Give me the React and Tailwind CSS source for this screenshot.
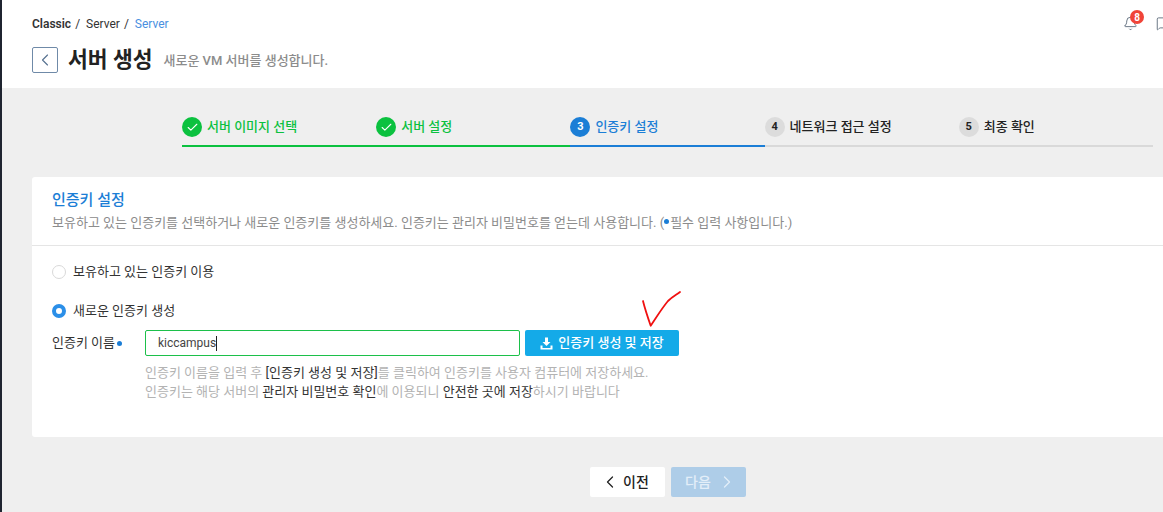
import React from 'react';
import { Bell, ChevronLeft, ChevronRight, Check, MessageSquare } from 'lucide-react';

const font = { fontFamily: '"Roboto", "Noto Sans CJK KR", sans-serif' };

const steps = [
  { no: 1, label: '서버 이미지 선택', state: 'done' },
  { no: 2, label: '서버 설정', state: 'done' },
  { no: 3, label: '인증키 설정', state: 'active' },
  { no: 4, label: '네트워크 접근 설정', state: 'todo' },
  { no: 5, label: '최종 확인', state: 'todo' },
];

const Step = ({ no, label, state }) => {
  const line = state === 'done' ? 'border-[#0bc13f]' : state === 'active' ? 'border-[#1b7ed6]' : 'border-[#d9d9d9]';
  const text = state === 'done' ? 'text-[#0bc13f]' : state === 'active' ? 'text-[#1b7ed6]' : 'text-[#222]';
  const circle = state === 'done' ? 'bg-[#0bc13f] text-white' : state === 'active' ? 'bg-[#1b7ed6] text-white' : 'bg-[#dcdcdc] text-[#222]';

  return (
    <div className={`w-[194.2px] h-[30px] flex items-start gap-[5px] border-b-2 ${line}`}>
      <span className={`w-5 h-5 rounded-full flex items-center justify-center text-[11px] font-bold ${circle}`}>
        {state === 'done' ? <Check size={13} strokeWidth={2} /> : no}
      </span>
      <span className={`text-[13px] leading-5 font-medium ${text}`}>{label}</span>
    </div>
  );
};

export default function App() {
  return (
    <div style={font} className="w-[1163px] h-[512px] overflow-hidden relative flex bg-[#efefef]">
      <div className="w-[2px] bg-[#1f2430] shrink-0" />

      <div className="flex-1 min-w-0">
        {/* header */}
        <div className="h-[88px] bg-white pl-[30px] pt-[16px] relative">
          <div className="flex items-center gap-[4px] text-[12px] leading-[16px] text-[#333]">
            <span className="font-semibold">Classic</span>
            <span>/</span>
            <span className="ml-[2px]">Server</span>
            <span>/</span>
            <span className="ml-[2px] text-[#4a8fe0]">Server</span>
          </div>
          <div className="flex items-center mt-[15px]">
            <button className="w-[26px] h-[26px] border border-[#6f8aa8] rounded-[2px] flex items-center justify-center text-[#55708f]">
              <ChevronLeft size={20} strokeWidth={1.3} />
            </button>
            <h1 className="ml-[10px] text-[21.500px] leading-[24px] font-bold text-[#222]">서버 생성</h1>
            <span className="ml-[11px] mt-[1px] text-[13px] font-medium text-[#8c8c8c]">새로운 VM 서버를 생성합니다.</span>
          </div>

          <div className="absolute left-[1121px] top-[16px] text-[#4a5a6b]">
            <Bell size={15} strokeWidth={1.3} />
          </div>
          <span className="absolute left-[1128px] top-[10px] w-[14px] h-[14px] rounded-full bg-[#f04438] text-white text-[10px] font-bold flex items-center justify-center">
            8
          </span>
          <div className="absolute left-[1154px] top-[16px] text-[#4a5a6b]">
            <MessageSquare size={15} strokeWidth={1.3} />
          </div>
        </div>

        {/* steps */}
        <div className="pl-[180px] pt-[29px] flex">
          {steps.map((s) => (
            <Step key={s.no} {...s} />
          ))}
        </div>

        {/* card */}
        <div className="ml-[30px] mt-[30px] h-[260px] bg-white rounded-l-[3px]">
          <div className="h-[69px] px-[20px] pt-[13px] border-b border-[#e5e5e5]">
            <h2 className="text-[15px] leading-[20px] font-medium text-[#1b7ed6]">인증키 설정</h2>
            <p className="mt-[4px] text-[13px] leading-[18px] text-[#8c8c8c] whitespace-nowrap">
              보유하고 있는 인증키를 선택하거나 새로운 인증키를 생성하세요. 인증키는 관리자 비밀번호를 얻는데 사용합니다. (
              <span className="inline-block w-[5px] h-[5px] mb-[3px] mr-[1px] rounded-full bg-[#1b7ed6]" />
              필수 입력 사항입니다.)
            </p>
          </div>

          <div className="px-[20px] pt-[17px]">
            <label className="flex items-center gap-[7px] h-[18px]">
              <span className="w-[14px] h-[14px] rounded-full border border-[#d9d9d9] bg-white" />
              <span className="text-[13px] text-[#333]">보유하고 있는 인증키 이용</span>
            </label>

            <label className="flex items-center gap-[7px] h-[18px] mt-[21px]">
              <span className="w-[14px] h-[14px] rounded-full border-[4px] border-[#2b8fe8] bg-white" />
              <span className="text-[13px] text-[#333]">새로운 인증키 생성</span>
            </label>

            <div className="flex items-center mt-[10px]">
              <span className="w-[93px] flex items-center gap-[2px] text-[13px] text-[#333]">
                인증키 이름
                <span className="w-[5px] h-[5px] rounded-full bg-[#1b7ed6]" />
              </span>
              <div className="w-[375px] h-[26px] border border-[#1cc04a] rounded-[2px] pl-[12px] flex items-center text-[12px] text-[#444]">
                kiccampus<span className="w-px h-[15px] bg-[#222]" />
              </div>
              <button className="ml-[5px] w-[154px] h-[26px] bg-[#14aae8] rounded-[2px] flex items-center justify-center gap-[5px] text-white text-[13px] font-medium">
                <svg width="13" height="13" viewBox="0 0 13 13" fill="currentColor">
                  <path d="M5 0.5h3v4.5h2.5L6.5 9 2.500 5H5z" />
                  <path d="M0.5 8.500h2v2.500h8v-2.500h2v4h-12z" />
                </svg>
                인증키 생성 및 저장
              </button>
            </div>

            <div className="ml-[93px] mt-[7px] text-[13px] leading-[19px] text-[#b3b3b3] whitespace-nowrap">
              <p>
                인증키 이름을 입력 후 <span className="text-[#333]">[인증키 생성 및 저장]</span>를 클릭하여 인증키를 사용자 컴퓨터에 저장하세요.
              </p>
              <p>
                인증키는 해당 서버의 <span className="text-[#333]">관리자 비밀번호 확인</span>에 이용되니{' '}
                <span className="text-[#333]">안전한 곳에 저장</span>하시기 바랍니다
              </p>
            </div>
          </div>
        </div>

        {/* prev / next */}
        <div className="flex justify-center gap-[6px] mt-[30px] pl-[171px]">
          <button className="w-[75px] h-[30px] pr-[6px] bg-white rounded-[2px] flex items-center justify-center gap-[3px] text-[14px] font-medium text-[#222]">
            <ChevronLeft size={20} strokeWidth={1.5} />
            이전
          </button>
          <button className="w-[75px] h-[30px] pl-[5px] bg-[#aecde8] rounded-[2px] flex items-center justify-center gap-[6px] text-[14px] font-medium text-[#e3eef8]">
            다음
            <ChevronRight size={20} strokeWidth={1.5} />
          </button>
        </div>
      </div>

      {/* red pen mark over the screenshot */}
      <svg className="absolute left-[640px] top-[288px]" width="44" height="42" viewBox="0 0 44 42" fill="none">
        <path d="M3 13C5 21 8 30 10.700 37.700C16 30 22 20 28 13C32 9 36 7 40 4" stroke="#f01010" strokeWidth="1.8" strokeLinecap="round" strokeLinejoin="round" />
      </svg>
    </div>
  );
}
